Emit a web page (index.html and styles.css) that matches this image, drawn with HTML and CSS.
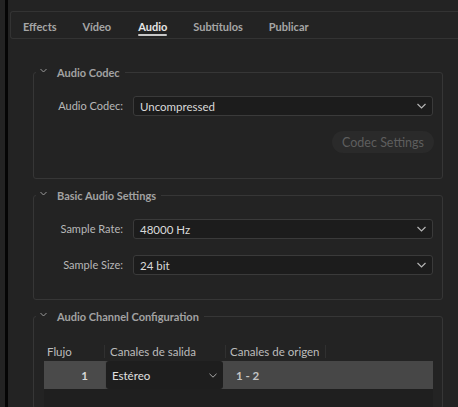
FILE: index.html
```html
<!DOCTYPE html>
<html lang="es">
<head>
<meta charset="utf-8">
<title>Export Settings - Audio</title>
<link rel="stylesheet" href="styles.css">
</head>
<body>
<div class="app">
  <div class="gutter"></div>
  <div class="divider"></div>
  <div class="main">
    <nav class="tabs">
      <span class="tab">Effects</span>
      <span class="tab">Vídeo</span>
      <span class="tab active">Audio</span>
      <span class="tab">Subtítulos</span>
      <span class="tab">Publicar</span>
    </nav>

    <fieldset class="panel panel-codec">
      <legend class="legend"><svg class="chev-sm" width="7" height="5" viewBox="0 0 7 5"><path d="M0.5 1 L3.5 4 L6.5 1" fill="none" stroke="#9a9a9a" stroke-width="1"/></svg><span>Audio Codec</span></legend>
      <div class="form">
        <label class="label">Audio Codec:</label>
        <div class="select"><span>Uncompressed</span><svg class="chev" width="9" height="6" viewBox="0 0 9 6"><path d="M0.5 1 L4.5 5 L8.5 1" fill="none" stroke="#b4b4b4" stroke-width="1.2"/></svg></div>
      </div>
      <div class="actions"><button class="btn" disabled>Codec Settings</button></div>
    </fieldset>

    <fieldset class="panel panel-basic">
      <legend class="legend"><svg class="chev-sm" width="7" height="5" viewBox="0 0 7 5"><path d="M0.5 1 L3.5 4 L6.5 1" fill="none" stroke="#9a9a9a" stroke-width="1"/></svg><span>Basic Audio Settings</span></legend>
      <div class="form form-basic">
        <label class="label">Sample Rate:</label>
        <div class="select"><span>48000 Hz</span><svg class="chev" width="9" height="6" viewBox="0 0 9 6"><path d="M0.5 1 L4.5 5 L8.5 1" fill="none" stroke="#b4b4b4" stroke-width="1.2"/></svg></div>
        <label class="label">Sample Size:</label>
        <div class="select"><span>24 bit</span><svg class="chev" width="9" height="6" viewBox="0 0 9 6"><path d="M0.5 1 L4.5 5 L8.5 1" fill="none" stroke="#b4b4b4" stroke-width="1.2"/></svg></div>
      </div>
    </fieldset>

    <fieldset class="panel panel-channels">
      <legend class="legend"><svg class="chev-sm" width="7" height="5" viewBox="0 0 7 5"><path d="M0.5 1 L3.5 4 L6.5 1" fill="none" stroke="#9a9a9a" stroke-width="1"/></svg><span>Audio Channel Configuration</span></legend>
      <div class="table">
        <div class="thead">
          <div class="th c1">Flujo</div>
          <div class="th c2">Canales de salida</div>
          <div class="th c3">Canales de origen</div>
          <div class="th c4"></div>
        </div>
        <div class="trow">
          <div class="td c1 num">1</div>
          <div class="td c2"><div class="cell-select"><span>Estéreo</span><svg width="8" height="5" viewBox="0 0 8 5"><path d="M0.5 0.8 L4 4.2 L7.5 0.8" fill="none" stroke="#a8a8a8" stroke-width="1"/></svg></div></div>
          <div class="td c3 src">1 - 2</div>
          <div class="td c4"></div>
        </div>
        <div class="tbody"></div>
      </div>
    </fieldset>
  </div>
</div>
</body>
</html>
```

FILE: styles.css
```css
* { box-sizing: border-box; }

html, body {
  margin: 0;
  padding: 0;
  background: #232323;
  width: 458px;
  height: 407px;
  overflow: hidden;
  font-family: "Lato", "Open Sans", sans-serif;
  font-size: 11.5px;
  color: #b4b4b4;
}

.app {
  display: flex;
  height: 407px;
}

.gutter {
  width: 5px;
  background: #232323;
  flex: none;
}

.divider {
  width: 3px;
  background: #050505;
  flex: none;
}

.main {
  flex: 1;
  min-width: 0;
  background: #232323;
}

/* Tabs */
.tabs {
  margin: 11px 0 0 2px;
  height: 28px;
  border-top: 1px solid #333333;
  border-bottom: 1px solid #333333;
  border-left: 1px solid #333333;
  border-radius: 3px 0 0 3px;
  display: flex;
  align-items: stretch;
  gap: 26px;
  padding-left: 12px;
}

.tab {
  display: flex;
  align-items: center;
  color: #a6a6a6;
  font-weight: 700;
  font-size: 11px;
  position: relative;
  padding-top: 2px;
}

.tab:nth-child(3) { margin-left: 1px; }

.tab.active {
  color: #e6e6e6;
}

.tab.active::after {
  content: "";
  position: absolute;
  left: 0;
  right: 0;
  bottom: 2px;
  height: 2px;
  background: #c8c8c8;
  border-radius: 1px;
}

/* Panels */
.panel {
  margin: 0 15px 0 25px;
  padding: 0 9px 0 0;
  border: 1px solid #363636;
  border-radius: 3px;
  min-width: 0;
}

.panel-codec { margin-top: 25px; padding-bottom: 25px; }
.panel-basic { margin-top: 8px; padding-bottom: 24px; }
.panel-channels { margin-top: 8px; padding-left: 10px; padding-bottom: 0; }

.legend {
  margin-left: 2px;
  padding: 0 5px 0 4px;
  height: 16px;
  display: flex;
  align-items: center;
  font-weight: 700;
  color: #a2a2a2;
  font-size: 11px;
}

.panel-channels .legend { margin-left: -8px; }

.chev-sm {
  margin-right: 10px;
  margin-top: -3px;
}

.form {
  display: grid;
  grid-template-columns: 89px 1fr;
  column-gap: 10px;
  row-gap: 16px;
  align-items: center;
  margin-top: 16px;
}

.form-basic {
  margin-top: 16px;
  row-gap: 16px;
}

.label {
  text-align: right;
  color: #b8b8b8;
  font-size: 11px;
  line-height: 14px;
}

.select {
  height: 20px;
  background: #1c1c1c;
  border: 1px solid #3a3a3a;
  border-radius: 3px;
  display: flex;
  align-items: center;
  justify-content: space-between;
  padding: 0 6px 0 6px;
  color: #dadada;
}

.actions {
  display: flex;
  justify-content: flex-end;
  margin-top: 15px;
  margin-right: -1px;
}

.btn {
  height: 22px;
  width: 102px;
  border: none;
  border-radius: 11px;
  background: #2a2a2a;
  color: #5e5e5e;
  font-family: inherit;
  font-size: 12.5px;
  padding: 0;
}

/* Table */
.table {
  margin-top: 17px;
}

.thead {
  display: flex;
  height: 20px;
  align-items: center;
}

.c1 { width: 61px; flex: none; }
.c2 { width: 121px; flex: none; }
.c3 { width: 100px; flex: none; }
.c4 { flex: 1; }

.th {
  height: 13px;
  display: flex;
  align-items: center;
  color: #bdbdbd;
  border-right: 1px solid #303030;
}

.th.c1 { padding-left: 3px; }
.th.c2 { padding-left: 5px; }
.th.c3 { padding-left: 4px; }
.th.c4 { border-right: none; }

.trow {
  display: flex;
  height: 28px;
  background: #474747;
}

.td {
  display: flex;
  align-items: center;
}

.num {
  justify-content: flex-end;
  padding-right: 17px;
  color: #d8d8d8;
  font-weight: 700;
  background: #4a4a4a;
}

.td.c2 {
  padding-left: 1px;
  padding-right: 3px;
}

.cell-select {
  width: 100%;
  height: 28px;
  background: #1e1e1e;
  border-radius: 3px;
  display: flex;
  align-items: center;
  justify-content: space-between;
  padding: 0 6px 0 6px;
  color: #e0e0e0;
}

.src {
  padding-left: 10px;
  font-weight: 700;
  color: #c4c4c4;
}

.tbody {
  height: 19px;
  background: #1f1f1f;
}
```
